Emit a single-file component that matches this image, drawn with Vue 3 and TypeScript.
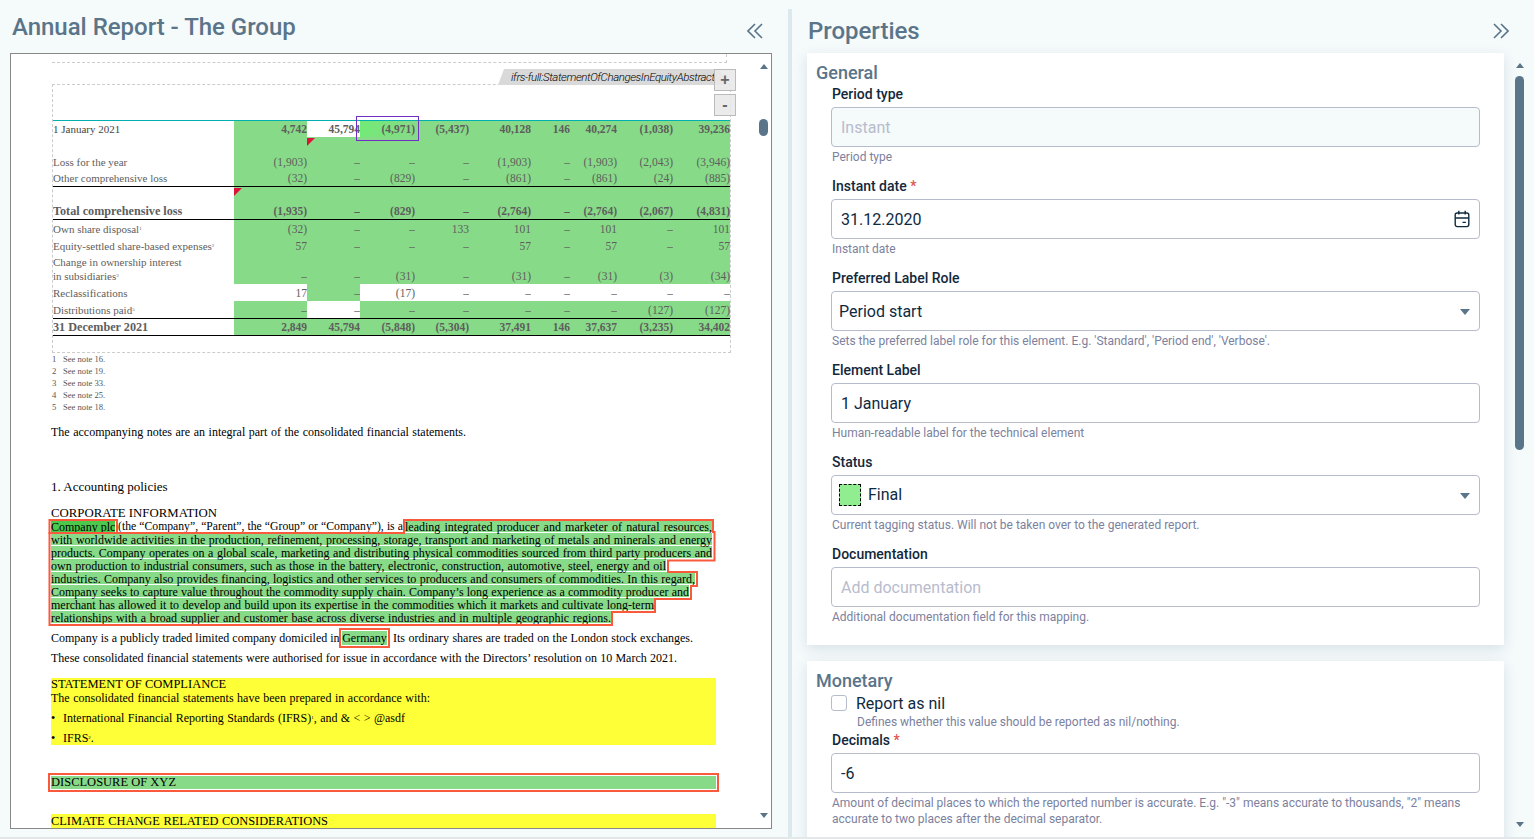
<script setup lang="ts">
interface Row {
  label?: string
  sub?: string
  second?: string
  cells?: string[]
  white?: number[]
  cls: string
  tri?: number
}

const d = '–'
const rows: Row[] = [
  { label: '1 January 2021', cells: ['4,742', '45,794', '(4,971)', '(5,437)', '40,128', '146', '40,274', '(1,038)', '39,236'], white: [1], cls: 'h16 strong-nums first' },
  { cls: 'h16', tri: 1 },
  { label: 'Loss for the year', cells: ['(1,903)', d, d, d, '(1,903)', d, '(1,903)', '(2,043)', '(3,946)'], cls: 'h17' },
  { label: 'Other comprehensive loss', cells: ['(32)', d, '(829)', d, '(861)', d, '(861)', '(24)', '(885)'], cls: 'h17 ruled' },
  { cls: 'h16', tri: 0 },
  { label: 'Total comprehensive loss', cells: ['(1,935)', d, '(829)', d, '(2,764)', d, '(2,764)', '(2,067)', '(4,831)'], cls: 'h17 ruled bold' },
  { label: 'Own share disposal', sub: '1', cells: ['(32)', d, d, '133', '101', d, '101', d, '101'], cls: 'h17' },
  { label: 'Equity-settled share-based expenses', sub: '2', cells: ['57', d, d, d, '57', d, '57', d, '57'], cls: 'h17' },
  { label: 'Change in ownership interest', second: 'in subsidiaries', sub: '3', cells: [d, d, '(31)', d, '(31)', d, '(31)', '(3)', '(34)'], cls: 'h30 tall' },
  { label: 'Reclassifications', cells: ['17', d, '(17)', d, d, d, d, d, d], white: [0, 2, 3, 4, 5, 6, 7, 8], cls: 'h17' },
  { label: 'Distributions paid', sub: '5', cells: [d, d, d, d, d, d, d, '(127)', '(127)'], white: [1], cls: 'h18 ruled' },
  { label: '31 December 2021', cells: ['2,849', '45,794', '(5,848)', '(5,304)', '37,491', '146', '37,637', '(3,235)', '34,402'], cls: 'h17 ruled bold' },
]

const colWidths = [181, 73, 53, 55, 54, 62, 39, 47, 56, 57]
const notes = ['16', '19', '33', '25', '18']

const paragraph = [
  { text: 'with worldwide activities in the production, refinement, processing, storage, transport and marketing of metals and minerals and energy', width: 661 },
  { text: 'products. Company operates on a global scale, marketing and distributing physical commodities sourced from third party producers and', width: 661 },
  { text: 'own production to industrial consumers, such as those in the battery, electronic, construction, automotive, steel, energy and oil', width: 615 },
  { text: 'industries. Company also provides financing, logistics and other services to producers and consumers of commodities. In this regard,', width: 644 },
  { text: 'Company seeks to capture value throughout the commodity supply chain. Company’s long experience as a commodity producer and', width: 638 },
  { text: 'merchant has allowed it to develop and build upon its expertise in the commodities which it markets and cultivate long-term', width: 603 },
  { text: 'relationships with a broad supplier and customer base across diverse industries and in multiple geographic regions.', width: 560 },
]

const tagOutline = '404,520 713,520 713,532 714.5,532 714.5,560.5 668,560.5 668,572 697,572 697,586 691,586 691,599 655,599 655,612 612,612 612,625 49.5,625 49.5,533 404,533'
</script>

<template>
  <div class="page">
    <section class="report-pane">
      <header class="pane-head report-head">
        <h1 class="pane-title">Annual Report - The Group</h1>
        <svg class="chev" width="16" height="16" viewBox="0 0 16 16" fill="none">
          <path d="M8 1L1 8l7 7M15 1L8 8l7 7" stroke="#5a7589" stroke-width="1.6" />
        </svg>
      </header>

      <div class="viewer">
        <div class="doc">
          <div class="prev-fragment"></div>

          <div class="fact-frame">
            <div class="tag"><span>ifrs-full:StatementOfChangesInEquityAbstract</span></div>
            <button class="zoom-btn plus">+</button>
            <button class="zoom-btn minus">-</button>
            <div class="focus-box"></div>

            <table class="equity">
              <colgroup>
                <col v-for="(w, i) in colWidths" :key="i" :style="{ width: w + 'px' }" />
              </colgroup>
              <tbody>
                <tr v-for="(row, r) in rows" :key="r" :class="row.cls">
                  <td class="label-cell">
                    <template v-if="row.label">{{ row.label }}<template v-if="row.second"><br />{{ row.second }}</template><sup v-if="row.sub">{{ row.sub }}</sup></template>
                  </td>
                  <template v-if="row.cells">
                    <td
                      v-for="(c, i) in row.cells"
                      :key="i"
                      :class="['num', { white: row.white?.includes(i), active: r === 0 && i === 2 }]"
                    >{{ c }}</td>
                  </template>
                  <template v-else>
                    <td v-for="i in 9" :key="i" class="num">
                      <span v-if="row.tri === i - 1" class="tri"></span>
                    </td>
                  </template>
                </tr>
              </tbody>
            </table>
          </div>

          <ol class="notes">
            <li v-for="(n, i) in notes" :key="n"><span class="note-no">{{ i + 1 }}</span>See note {{ n }}.</li>
          </ol>

          <p class="fit accompanying">The accompanying notes are an integral part of the consolidated financial statements.</p>
          <p class="fit policies">1. Accounting policies</p>
          <p class="fit caps corporate">CORPORATE INFORMATION</p>

          <div class="para">
            <div class="para-first">
              <span class="fit hl-strong company">Company plc</span>
              <span class="fit the-company">(the “Company”, “Parent”, the “Group” or “Company”), is a</span>
              <span class="fit hl leading">leading integrated producer and marketer of natural resources,</span>
            </div>
            <div v-for="line in paragraph" :key="line.width + line.text" class="fit hl para-line" :style="{ width: line.width + 'px' }">{{ line.text }}</div>
          </div>

          <div class="domicile">
            <span class="fit dom-a">Company is a publicly traded limited company domiciled in</span>
            <span class="fit hl germany">Germany</span>
            <span class="fit dom-b">Its ordinary shares are traded on the London stock exchanges.</span>
          </div>
          <p class="fit authorised">These consolidated financial statements were authorised for issue in accordance with the Directors’ resolution on 10 March 2021.</p>

          <div class="yellow compliance">
            <p class="fit caps compliance-h">STATEMENT OF COMPLIANCE</p>
            <p class="fit compliance-t">The consolidated financial statements have been prepared in accordance with:</p>
            <div class="bullet one"><span class="dot">•</span><span class="fit b-one">International Financial Reporting Standards (IFRS)<sup>1</sup>, and &amp; &lt; &gt; @asdf</span></div>
            <div class="bullet two"><span class="dot">•</span><span>IFRS<sup>2</sup>.</span></div>
          </div>

          <div class="disclosure"><span class="fit caps disclosure-t">DISCLOSURE OF XYZ</span></div>

          <div class="yellow climate"><span class="fit caps climate-t">CLIMATE CHANGE RELATED CONSIDERATIONS</span></div>

          <svg class="tag-outline" viewBox="11 54 744 774" fill="none" stroke="#fa5a3c" stroke-width="2">
            <rect x="49.5" y="520" width="67.5" height="13" />
            <polygon :points="tagOutline" />
          </svg>
        </div>

        <div class="doc-scroll">
          <span class="arrow up"></span>
          <span class="doc-thumb"></span>
          <span class="arrow down"></span>
        </div>
      </div>
    </section>

    <div class="divider"></div>

    <section class="props-pane">
      <header class="pane-head props-head">
        <h2 class="pane-title">Properties</h2>
        <svg class="chev" width="16" height="16" viewBox="0 0 16 16" fill="none">
          <path d="M1 1l7 7-7 7M8 1l7 7-7 7" stroke="#5a7589" stroke-width="1.6" />
        </svg>
      </header>

      <div class="props-body">
        <div class="cards">
          <div class="card general">
            <h3>General</h3>
            <div class="field">
              <label>Period type</label>
              <div class="input disabled">Instant</div>
              <small>Period type</small>
            </div>
            <div class="field">
              <label>Instant date <em>*</em></label>
              <div class="input">
                <span>31.12.2020</span>
                <svg class="cal" width="16" height="18" viewBox="0 0 16 18" fill="none" stroke="#0f2a3f" stroke-width="1.4">
                  <rect x="1.2" y="3" width="13.6" height="13.6" rx="2" />
                  <path d="M1.2 8h13.6M4.8 .8v3.6M11.2 .8v3.6M8.5 12.4h3.4" />
                </svg>
              </div>
              <small>Instant date</small>
            </div>
            <div class="field">
              <label>Preferred Label Role</label>
              <div class="input select"><span>Period start</span><i class="caret"></i></div>
              <small>Sets the preferred label role for this element. E.g. 'Standard', 'Period end', 'Verbose'.</small>
            </div>
            <div class="field">
              <label>Element Label</label>
              <div class="input">1 January</div>
              <small>Human-readable label for the technical element</small>
            </div>
            <div class="field">
              <label>Status</label>
              <div class="input select">
                <span class="status"><b class="swatch"></b>Final</span><i class="caret"></i>
              </div>
              <small>Current tagging status. Will not be taken over to the generated report.</small>
            </div>
            <div class="field">
              <label>Documentation</label>
              <div class="input placeholder">Add documentation</div>
              <small>Additional documentation field for this mapping.</small>
            </div>
          </div>

          <div class="card monetary">
            <h3>Monetary</h3>
            <div class="check-row">
              <span class="checkbox"></span>
              <span>Report as nil</span>
            </div>
            <small class="check-help">Defines whether this value should be reported as nil/nothing.</small>
            <div class="field">
              <label>Decimals <em>*</em></label>
              <div class="input">-6</div>
              <small>Amount of decimal places to which the reported number is accurate. E.g. "-3" means accurate to thousands, "2" means accurate to two places after the decimal separator.</small>
            </div>
          </div>
        </div>

        <div class="props-scroll">
          <span class="arrow up"></span>
          <span class="props-thumb"></span>
          <span class="arrow down"></span>
        </div>
      </div>
    </section>
  </div>
</template>

<style>
html, body {
  margin: 0;
  background: #f5fafb;
  overflow: hidden;
}
</style>

<style scoped>
.page {
  display: flex;
  box-sizing: border-box;
  width: 1534px;
  height: 839px;
  border-bottom: 2px solid #e2e7e9;
  background: #f5fafb;
  font-family: Roboto, sans-serif;
  overflow: hidden;
}

/* ---- panes ---- */
.report-pane {
  width: 788px;
  flex-shrink: 0;
}

.divider {
  width: 4px;
  flex-shrink: 0;
  margin-top: 9px;
  background: #dde8ec;
}

.props-pane {
  flex: 1;
  min-width: 0;
}

.pane-head {
  display: flex;
  align-items: center;
  justify-content: space-between;
  height: 53px;
  box-sizing: border-box;
}

.report-head {
  padding: 0 25px 0 12px;
}

.report-head .chev {
  margin-top: 9px;
}

.props-head {
  padding: 8px 25px 0 16px;
}

.pane-title {
  margin: 0;
  font-size: 24px;
  line-height: 28px;
  font-weight: 500;
  color: #5a7589;
  letter-spacing: -0.02px;
}

.report-head .pane-title {
  margin-top: 1px;
}

/* ---- document viewer ---- */
.viewer {
  display: flex;
  box-sizing: border-box;
  width: 762px;
  height: 776px;
  margin-left: 10px;
  border: 1px solid #888;
  background: #fff;
  overflow: hidden;
}

.doc {
  position: relative;
  width: 744px;
  flex-shrink: 0;
  overflow: hidden;
  padding-left: 40px;
  box-sizing: border-box;
  font-family: 'Liberation Serif', serif;
  font-size: 12px;
  line-height: 14px;
  color: #000;
}

.doc p {
  margin: 0;
}

.fit {
  display: block;
  white-space: nowrap;
  text-align-last: justify;
}

.caps {
  font-size: 12.5px;
}

.prev-fragment {
  box-sizing: border-box;
  width: 675px;
  height: 9px;
  margin-left: 1px;
  border: 1px dashed #ccc;
  border-width: 0 1px 1px 0;
}

.fact-frame {
  position: relative;
  box-sizing: border-box;
  width: 679px;
  margin: 21px 0 0 1px;
  padding: 35px 0 16px;
  border: 1px dashed #ccc;
}

.tag {
  position: absolute;
  top: -16px;
  left: 445px;
  width: 227px;
  height: 16px;
  background: #d9d9d9;
  clip-path: polygon(6px 0, 222px 0, 227px 100%, 0 100%);
  font-family: Roboto, sans-serif;
  font-style: italic;
  font-weight: 300;
  font-size: 11.5px;
  line-height: 16px;
  color: #000;
  letter-spacing: -0.41px;
  white-space: nowrap;
}

.tag span {
  display: block;
  margin-left: 13px;
}

.zoom-btn {
  position: absolute;
  left: 661px;
  box-sizing: border-box;
  width: 22px;
  height: 22px;
  padding: 0;
  border: 1px solid #bbb;
  background: rgba(232, 232, 232, 0.88);
  font-family: 'Liberation Sans', sans-serif;
  font-size: 16px;
  font-weight: 700;
  line-height: 20px;
  color: #666;
}

.plus {
  top: -16px;
}

.minus {
  top: 9px;
}

.focus-box {
  position: absolute;
  z-index: 2;
  left: 303px;
  top: 31px;
  box-sizing: border-box;
  width: 63px;
  height: 25px;
  border: 1px solid #6f2fc4;
}

/* ---- equity table ---- */
.equity {
  table-layout: fixed;
  width: 677px;
  border-collapse: separate;
  border-spacing: 0;
  font-size: 11px;
  line-height: 14px;
  color: #5e5e5e;
}

.equity td {
  padding: 0;
  vertical-align: middle;
  white-space: nowrap;
}

.equity .num {
  position: relative;
  text-align: right;
  background: #87da87;
  font-size: 11.5px;
}

.equity .num.white {
  background: #fff;
}

.equity .num.active {
  background: linear-gradient(90deg, #72ea76, #87da87);
}

.h16 { height: 16px; }
.h17 { height: 17px; }
.h18 { height: 18px; }
.h30 { height: 30px; }

.first td {
  border-top: 1px solid #00b0b0;
  height: 17px;
  box-sizing: border-box;
}

.first .label-cell {
  color: #444;
}

.strong-nums .num,
.bold td {
  font-weight: 700;
}

.bold .label-cell {
  font-size: 12.2px;
}

.ruled td {
  border-bottom: 1px solid #000;
}

.tall .num {
  vertical-align: bottom;
  padding-bottom: 1px;
}

.equity sup,
.doc sup {
  font-size: 5px;
  line-height: 0;
  vertical-align: 3px;
}

.tri {
  position: absolute;
  left: 0;
  top: 1px;
  width: 0;
  height: 0;
  border-top: 8px solid #dc143c;
  border-right: 8px solid transparent;
}

/* ---- notes ---- */
.notes {
  margin: 0 0 0 1px;
  padding: 0;
  list-style: none;
  font-size: 8.6px;
  line-height: 12px;
  color: #555;
}

.note-no {
  display: inline-block;
  width: 11px;
}

.accompanying {
  width: 415px;
  margin-top: 12px !important;
}

.policies {
  width: 115px;
  margin-top: 41px !important;
  font-size: 13px;
}

.corporate {
  width: 164px;
  margin-top: 12px !important;
  font-size: 12.8px;
}

/* ---- tagged paragraph ---- */
.para {
  margin-top: 1px;
}

.para-first {
  display: flex;
  height: 12px;
}

.para-first span {
  height: 11px;
  line-height: 12px;
}

.para-line {
  height: 12px;
  line-height: 14px;
  margin-bottom: 1px;
}

.hl {
  background: #87da87;
}

.hl-strong {
  background: #4cc94c;
}

.company {
  width: 64px;
}

.the-company {
  width: 285px;
  margin: 0 2px 0 3px;
  font-size: 11.7px;
}

.leading {
  width: 307px;
}

.domicile {
  display: flex;
  margin-top: 8px;
}

.dom-a {
  width: 288px;
}

.germany {
  position: relative;
  width: 45px;
  margin-left: 3px;
  outline: 2px solid #fa5a3c;
  outline-offset: 1px;
  text-align-last: center;
}

.dom-b {
  width: 300px;
  margin-left: 6px;
}

.authorised {
  width: 626px;
  margin-top: 6px !important;
}

.yellow {
  width: 665px;
  background: #ffff37;
}

.compliance {
  margin-top: 13px;
  height: 67px;
}

.compliance-h {
  width: 175px;
  line-height: 13px;
}

.compliance-t {
  width: 379px;
}

.bullet {
  display: flex;
  height: 14px;
}

.bullet.one {
  margin-top: 6px;
}

.bullet.two {
  margin-top: 6px;
}

.dot {
  width: 12px;
}

.b-one {
  width: 342px;
}

.disclosure {
  width: 665px;
  height: 13px;
  margin-top: 31px;
  line-height: 13px;
  background: #87da87;
  outline: 2px solid #fa5a3c;
  outline-offset: 1px;
}

.disclosure-t {
  width: 121px;
}

.climate {
  height: 14px;
  margin-top: 25px;
}

.climate-t {
  width: 277px;
  font-size: 12.4px;
}

.tag-outline {
  position: absolute;
  left: 0;
  top: 0;
  width: 744px;
  height: 774px;
  pointer-events: none;
}

/* ---- scrollbars ---- */
.doc-scroll,
.props-scroll {
  display: flex;
  flex-direction: column;
  align-items: center;
}

.doc-scroll {
  width: 17px;
  padding-left: 1px;
  box-sizing: border-box;
}

.arrow {
  width: 0;
  height: 0;
  border-left: 4.5px solid transparent;
  border-right: 4.5px solid transparent;
}

.arrow.up {
  border-bottom: 5px solid #5a7589;
}

.arrow.down {
  border-top: 5px solid #5a7589;
  margin-top: auto;
}

.doc-scroll .arrow.up {
  margin-top: 10px;
}

.doc-scroll .arrow.down {
  margin-bottom: 10px;
}

.doc-thumb {
  width: 9px;
  height: 17px;
  margin-top: 50px;
  border-radius: 5px;
  background: #5a7589;
}

/* ---- properties ---- */
.props-body {
  display: flex;
  height: 784px;
}

.cards {
  width: 697px;
  margin-left: 15px;
  flex-shrink: 0;
}

.card {
  background: #fff;
  padding: 9px 24px 9px 9px;
  box-shadow: 0 4px 12px rgba(90, 117, 137, 0.18);
}

.card + .card {
  margin-top: 16px;
}

.card h3 {
  margin: 0;
  font-size: 18px;
  line-height: 22px;
  font-weight: 500;
  color: #5a7589;
}

.field {
  margin: 0 0 11px 15px;
}

.field label {
  display: block;
  padding-left: 1px;
  margin-bottom: 3px;
  font-size: 14px;
  line-height: 20px;
  font-weight: 500;
  color: #13283b;
}

.field em {
  font-style: normal;
  color: #e0524f;
}

.field small,
.check-help {
  display: block;
  margin-top: 2px;
  padding-left: 1px;
  font-size: 12px;
  line-height: 16px;
  color: #7c819e;
}

.input {
  display: flex;
  align-items: center;
  justify-content: space-between;
  box-sizing: border-box;
  width: 649px;
  height: 40px;
  padding: 0 9px;
  border: 1px solid #b7bccd;
  border-radius: 4px;
  font-size: 16px;
  color: #0f2a3f;
}

.input.disabled {
  background: #f5fafb;
  color: #b8bccd;
}

.input.placeholder {
  color: #b8bccd;
}

.input.select {
  padding: 0 9px 0 7px;
}

.cal {
  margin-right: 0;
}

.caret {
  width: 0;
  height: 0;
  margin-top: 2px;
  border-left: 5.5px solid transparent;
  border-right: 5.5px solid transparent;
  border-top: 6px solid #5a7589;
}

.status {
  display: flex;
  align-items: center;
  line-height: 18px;
}

.swatch {
  box-sizing: border-box;
  width: 22px;
  height: 22px;
  margin-right: 7px;
  border: 1px dashed #000;
  background: #90ee90;
}

.check-row {
  display: flex;
  align-items: center;
  height: 22px;
  margin-left: 15px;
  font-size: 16px;
  color: #0f2a3f;
}

.checkbox {
  box-sizing: border-box;
  width: 16px;
  height: 16px;
  margin-right: 9px;
  border: 1px solid #b7bccd;
  border-radius: 3px;
  background: #fff;
}

.check-help {
  margin: 0 0 0 41px;
  padding-left: 0;
}

.props-scroll {
  width: 9px;
  margin-left: 11px;
}

.props-scroll .arrow.up {
  margin-top: 10px;
}

.props-thumb {
  width: 9px;
  height: 374px;
  margin-top: 8px;
  border-radius: 5px;
  background: #5a7589;
}

.props-scroll .arrow.down {
  margin-bottom: 10px;
}
</style>
